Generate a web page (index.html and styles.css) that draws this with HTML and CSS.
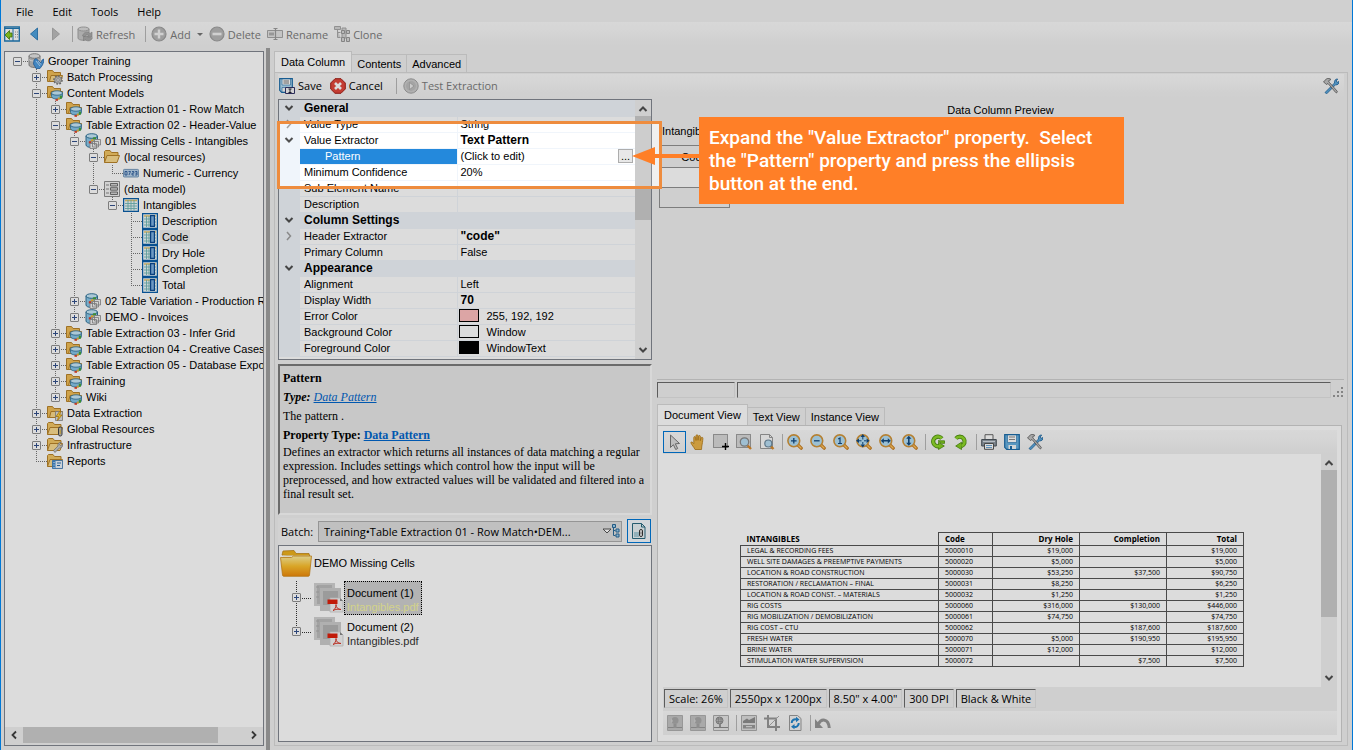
FILE: index.html
```
<!DOCTYPE html>
<html lang="en">
<head>
    <meta charset="UTF-8">
    <meta name="viewport" content="width=device-width, initial-scale=1.0">
    <title>Grooper Design Studio</title>

    <link rel="stylesheet" href="styles.css">
</head>
<body>
    <svg class="defs" aria-hidden="true">
        <!-- tree icons -->
        <symbol id="i-root" viewBox="0 0 16 16">
            <path d="M1 3v9c0 1.400 2.500 2.500 5.500 2.500s5.500-1.100 5.500-2.500V3z" fill="#bdbdbd" stroke="#8a8a8a"/>
            <ellipse cx="6.500" cy="3" rx="5.500" ry="2.300" fill="#e4e4e4" stroke="#8a8a8a"/>
            <path d="M1 6.500c2 2 9 2 11 0" fill="none" stroke="#eee"/>
            <path d="M6 7l2-1.500 5 4.500 1-3 2-1v2l-1.500 4-2.500 3.500H8L5.500 11z" fill="#4d9ce0" stroke="#1d5fa3" stroke-width=".7"/>
            <path d="M8 8l4 5M10 8l3 3.500" stroke="#d9ecff" stroke-width=".8"/>
        </symbol>
        <symbol id="i-folder" viewBox="0 0 16 16">
            <path d="M.5 13.500v-11l1-1H6l1.500 2H14v3" fill="#f3c767" stroke="#b9842a"/>
            <path d="M.5 13.500L3 6.500h12.500L13 13.500z" fill="#fbdc90" stroke="#b9842a"/>
        </symbol>
        <symbol id="i-tabs" viewBox="0 0 16 16">
            <path d="M.5 12.500v-11h5l1.500 2h6.500v9z" fill="#f0bd57" stroke="#b9842a"/>
            <path d="M2.500 12.500l1.500-6h11.500l-1.500 6z" fill="#fbd98b" stroke="#b9842a"/>
        </symbol>
        <symbol id="i-fgear" viewBox="0 0 16 16">
            <use href="#i-tabs"/>
            <circle cx="11" cy="11" r="3.800" fill="none" stroke="#777" stroke-width="2" stroke-dasharray="1.700 1.200"/>
            <circle cx="11" cy="11" r="3.300" fill="#c8c8c8" stroke="#888" stroke-width=".7"/>
            <circle cx="11" cy="11" r="1.300" fill="#fff" stroke="#777" stroke-width=".6"/>
        </symbol>
        <symbol id="i-fmodel" viewBox="0 0 16 16">
            <use href="#i-tabs"/>
            <path d="M4.500 8v3.500c0 1.500 2.500 2.500 5.500 2.500s5.600-1 5.600-2.500V8z" fill="#86c4e8" stroke="#2c6e96" stroke-width=".8"/>
            <ellipse cx="10" cy="8" rx="5.600" ry="2.200" fill="#c8e8f8" stroke="#2c6e96" stroke-width=".8"/>
            <path d="M8.500 15.800h2.500v-1.900H8.500z" fill="#e0402a"/><path d="M10.800 14.600h2v-2h-2z" fill="#f2b52c"/><path d="M12.800 13.600h2.200v-3h-2.200z" fill="#45a53b"/>
        </symbol>
        <symbol id="i-fbolt" viewBox="0 0 16 16">
            <use href="#i-tabs"/>
            <path d="M8.500 6.500h7v9h-7z" fill="#ddd" stroke="#888" stroke-width=".8"/>
            <path d="M12.500 6.500l-3.500 5h2.500l-1 4 4.500-5.500h-2.500l1.500-3.500z" fill="#ffd23e" stroke="#b57a00" stroke-width=".7"/>
        </symbol>
        <symbol id="i-fclip" viewBox="0 0 16 16">
            <use href="#i-folder"/>
            <rect x="11.500" y="6" width="3.500" height="9" rx="1.700" fill="#bbb" stroke="#444"/>
            <path d="M13.200 8.500v4.500" stroke="#e0b52c"/>
        </symbol>
        <symbol id="i-fwrench" viewBox="0 0 16 16">
            <use href="#i-folder"/>
            <path d="M6.500 13.500l4.500-4.500c-.6-2 1-4 3-3.500l-1.500 2 1 1.200 2-1.400c.8 2-1.200 4-3 3.600L8 15.500z" fill="#c9c9c9" stroke="#777" stroke-width=".7"/>
        </symbol>
        <symbol id="i-freport" viewBox="0 0 16 16">
            <use href="#i-folder"/>
            <path d="M5.500 7.500h10v8h-10z" fill="#eaf3fb" stroke="#2d6cab" stroke-width=".8"/>
            <path d="M5.500 7.500h3v8h-3z" fill="#4188cc"/><path d="M10 10h4M10 12.500h3" stroke="#2d6cab"/>
            <path d="M7 9v1M7 11.500v1M7 14v1" stroke="#fff"/>
        </symbol>
        <symbol id="i-model" viewBox="0 0 16 16">
            <path d="M1 3v9c0 1.400 2.500 2.500 5.500 2.500s6-1.100 6-2.500V3z" fill="#8cc9ea" stroke="#22678f" stroke-width=".9"/>
            <ellipse cx="6.700" cy="3" rx="5.700" ry="2.300" fill="#c5e8f8" stroke="#22678f" stroke-width=".9"/>
            <path d="M8 6.500h3V4.300H8z" fill="#45a53b"/><path d="M5.800 8.500h2.700V6.300H5.800z" fill="#f2b52c"/><path d="M3.800 10.500h2.500V8.200H3.800z" fill="#e0402a"/>
            <path d="M9.500 6.500h6v5.500h-6zM7.500 8.500h6v5.500h-6zM5 10.500h6.500v5H5z" fill="#f4f4f4" stroke="#8a8a8a" stroke-width=".8"/>
        </symbol>
        <symbol id="i-form" viewBox="0 0 16 16">
            <path d="M.5.5h15v15H.5z" fill="#f4f4f4" stroke="#8f8f8f"/>
            <path d="M2 4h3M2 8h3M2 12h3" stroke="#888"/>
            <path d="M6.500 2.500h7v2.500h-7zM6.500 6.700h7v2.500h-7zM6.500 11h7v2.500h-7z" fill="#d4d4d4" stroke="#555" stroke-width=".8"/>
        </symbol>
        <symbol id="i-table" viewBox="0 0 16 16">
            <path d="M.6 1.600h14.800v12.800H.6z" fill="#eef7fa" stroke="#0a5ea8" stroke-width="1.200"/>
            <path d="M2 3.500h12" stroke="#e6c56c" stroke-width="1.500"/>
            <path d="M2 6.500h12M2 9h12M2 11.500h12M5 3v10.500M8 3v10.500M11 3v10.500" stroke="#6fb7b5" stroke-width=".9"/>
        </symbol>
        <symbol id="i-col" viewBox="0 0 16 16">
            <path d="M.6.6h14.800v14.800H.6z" fill="#eef7fa" stroke="#0a5ea8" stroke-width="1.200"/>
            <path d="M2 3h12" stroke="#e6c56c" stroke-width="1.500"/>
            <path d="M2 6h12M2 9h12M2 12h12M4.500 3v11M7 3v11" stroke="#6fb7b5" stroke-width=".9"/>
            <path d="M8.600 2.600h3.800v10.800H8.600z" fill="#7fb2e2" stroke="#0b4a92" stroke-width="1.200"/>
        </symbol>

        <!-- toolbar icons -->
        <symbol id="i-panel" viewBox="0 0 16 16">
            <path d="M.7 1h14.600v14H.7z" fill="#fff" stroke="#1f79b5" stroke-width="1.300"/>
            <path d="M1 2.500h14M9 2v13" stroke="#1f79b5"/><path d="M11 6h3M11 8.500h3M11 11h3" stroke="#999" stroke-dasharray="1 1"/>
            <path d="M1 9l4.500-4.500V7H8v4H5.500v2.500z" fill="#8fd020" stroke="#4a7d0c" stroke-width=".8"/>
        </symbol>
        <symbol id="i-refresh" viewBox="0 0 16 16">
            <path d="M1 3v9c0 1.300 2 2.200 5 2.200s6-.9 6-2.200V3z" fill="#c8c8c8" stroke="#a5a5a5"/>
            <ellipse cx="6.500" cy="3" rx="5.500" ry="2" fill="#dcdcdc" stroke="#a5a5a5"/>
            <path d="M5.500 10c1-4 5-5 7.500-2.500L15 6v5h-4.500l1.500-1.500c-2-1.500-3.500-.5-4 1zM15.500 11.500c-.8 3.500-5 4.500-7.500 2L6.500 15v-4.500H11" fill="#aaa" stroke="#8f8f8f" stroke-width=".6"/>
        </symbol>
        <symbol id="i-add" viewBox="0 0 16 16">
            <circle cx="8" cy="8" r="7" fill="#b8b8b8" stroke="#a0a0a0" stroke-width="1.200"/>
            <path d="M8 3.500v9M3.500 8h9" stroke="#f2f2f2" stroke-width="2.400"/>
        </symbol>
        <symbol id="i-del" viewBox="0 0 16 16">
            <circle cx="8" cy="8" r="7" fill="#b8b8b8" stroke="#a0a0a0" stroke-width="1.200"/>
            <path d="M3.500 8h9" stroke="#f2f2f2" stroke-width="2.600"/>
        </symbol>
        <symbol id="i-rename" viewBox="0 0 16 16">
            <path d="M.5 4.500h15v7H.5z" fill="#e4e4e4" stroke="#a5a5a5"/><path d="M2 6.500h5v3H2z" fill="#b0b0b0"/>
            <path d="M6.500 2.500h4M6.500 13.500h4M8.500 2.500v11" stroke="#9c9c9c" stroke-width="1.200"/>
        </symbol>
        <symbol id="i-clone" viewBox="0 0 16 16">
            <path d="M.5.500h6v3h-6zM3.500 3.500v8h3M3.500 6.500h3M8 2h4v10H8z" fill="#d6d6d6" stroke="#a8a8a8"/>
            <path d="M7.500 4.500h3v3h-3zM12.500 4.500h3v3h-3zM7.500 11.500h3v4h-3zM12.500 11.500h3v4h-3z" fill="#d8d8d8" stroke="#999"/>
        </symbol>
        <symbol id="i-save" viewBox="0 0 16 16">
            <path d="M.7.7h14.600v14.600H2.700l-2-2z" fill="#67b0df" stroke="#1c6ca8" stroke-width="1.200"/>
            <path d="M3.500 1h9v7.500h-9z" fill="#fff" stroke="#1c6ca8" stroke-width=".6"/>
            <path d="M5 3h6M5 5.500h6" stroke="#888"/><path d="M4.500 11h7.500v4H4.500z" fill="#f2f6f8"/><path d="M6 12h2v3H6z" fill="#1c6ca8"/>
        </symbol>
        <symbol id="i-savef" viewBox="0 0 16 16">
            <path d="M.7.7h12.600v13.600H2.700l-2-2z" fill="#b5dcf2" stroke="#1c6ca8" stroke-width="1.200"/>
            <path d="M3 1h8.500v6H3z" fill="#fff" stroke="#1c6ca8" stroke-width=".6"/><path d="M4.500 3h5.500M4.500 5h5.500" stroke="#777"/>
            <path d="M3 9.500h4v4.500H3z" fill="#f2f6f8" stroke="#1c6ca8" stroke-width=".6"/>
            <path d="M6.500 9.500h9v6h-9z" fill="#f4f4f4" stroke="#336"/><path d="M9.500 11h3M11 11v3.500M9.500 14.500h3" stroke="#223"/>
        </symbol>
        <symbol id="i-cancel" viewBox="0 0 16 16">
            <path d="M5 .7h6L15.300 5v6L11 15.300H5L.7 11V5z" fill="#e2473a" stroke="#a32018"/>
            <path d="M5 5l6 6M11 5l-6 6" stroke="#fff" stroke-width="2.600"/>
        </symbol>
        <symbol id="i-play" viewBox="0 0 16 16">
            <circle cx="8" cy="8" r="7.200" fill="#cdcdcd" stroke="#a3a3a3"/><circle cx="8" cy="8" r="5" fill="#bfbfbf"/>
            <path d="M6.500 4.500l4.500 3.500-4.500 3.500z" fill="#ececec" stroke="#999" stroke-width=".6"/>
        </symbol>
        <symbol id="i-tools" viewBox="0 0 16 16">
            <path d="M2 14.500L11.500 5c-.5-2.200 1-4.300 3.200-4l-1.500 2 1 1.300L16 3.500c.3 2.200-1.500 3.800-3.500 3.300L3.700 15.800z" fill="#5ba7dd" stroke="#21659c" stroke-width=".8"/>
            <path d="M.5 4l3-3.200C5 0 7 .5 8 1.500L5.500 2.800l.7 1.400 8 9c.6 1-.6 2-1.400 1.400L5 5.500 3.300 6.500 2.500 5.500z" fill="#c2c2c2" stroke="#5a5a5a" stroke-width=".8"/>
        </symbol>
        <symbol id="i-arrow" viewBox="0 0 16 16">
            <path d="M3.500 1l9 8.500-4.200.3 2.400 4.700-2 1-2.300-4.800-2.900 2.800z" fill="#ddd" stroke="#777"/>
        </symbol>
        <symbol id="i-hand" viewBox="0 0 16 16">
            <path d="M5 15.500C4 13 1.500 11 .8 8.500c.6-1 2-.3 3 1.200V3.500c0-1.200 1.700-1.200 1.900 0l.3 3V1.800c0-1.300 1.900-1.300 2 0v4.500l.5-4c.2-1.200 1.900-1 1.900.2l-.1 4.200.8-2.700c.4-1.200 1.900-.8 1.800.4-.2 3-.6 5.600-1.100 7.600l-.3 3.500z" fill="#ecb44a" stroke="#b27a18" stroke-width=".8"/>
        </symbol>
        <symbol id="i-sel" viewBox="0 0 16 16">
            <path d="M.5.500h14v13H.5z" fill="#d9d9d9" stroke="#555" stroke-dasharray="1 1"/>
            <path d="M12.500 9v7M9 12.500h7" stroke="#000" stroke-width="1.400"/>
        </symbol>
        <symbol id="i-selzoom" viewBox="0 0 16 16">
            <path d="M.5.500h14v13H.5z" fill="#d9d9d9" stroke="#555" stroke-dasharray="1 1"/>
            <path d="M11.500 11.500l3.500 3.500" stroke="#d88a2b" stroke-width="2.400"/><circle cx="8.500" cy="8" r="4.200" fill="#b9def4" stroke="#8a8a8a" stroke-width="1.300"/>
        </symbol>
        <symbol id="i-pagezoom" viewBox="0 0 16 16">
            <path d="M1.500.500h9l3 3v11h-12z" fill="#fafafa" stroke="#999"/><path d="M10.500.500v3h3" fill="none" stroke="#999"/>
            <path d="M11.500 12l3 3" stroke="#d88a2b" stroke-width="2.400"/><circle cx="9.300" cy="9.500" r="3.500" fill="#b9def4" stroke="#6d8ba0" stroke-width="1.200"/>
        </symbol>
        <symbol id="i-mag" viewBox="0 0 16 16">
            <path d="M11 11l3.200 3.200" stroke="#c77a1b" stroke-width="3.200" stroke-linecap="round"/>
            <path d="M11.500 11.500l2.500 2.500" stroke="#ffc562" stroke-width="1.400" stroke-linecap="round"/>
            <circle cx="6.800" cy="6.800" r="5.900" fill="#b4dff6" stroke="#d2953a" stroke-width="1.600"/>
        </symbol>
        <symbol id="i-zin" viewBox="0 0 16 16"><use href="#i-mag"/><path d="M6.800 4v5.600M4 6.800h5.600" stroke="#124a80" stroke-width="1.300"/></symbol>
        <symbol id="i-zout" viewBox="0 0 16 16"><use href="#i-mag"/><path d="M4 6.800h5.600" stroke="#124a80" stroke-width="1.300"/></symbol>
        <symbol id="i-z1" viewBox="0 0 16 16"><use href="#i-mag"/><path d="M5.200 5l1.800-1v5M5 9.500h4" fill="none" stroke="#124a80" stroke-width="1.200"/></symbol>
        <symbol id="i-zfit" viewBox="0 0 16 16"><use href="#i-mag"/><path d="M6.800 0l2.200 3H4.600zM6.800 13.600l2.200-3H4.600zM0 6.800l3-2.200v4.400zM13.600 6.800l-3-2.200v4.400z" fill="#124a80"/><path d="M6.800 3v2.500M6.800 8v2.500M3 6.800h2.500M8 6.800h2.500" stroke="#124a80"/></symbol>
        <symbol id="i-zw" viewBox="0 0 16 16"><use href="#i-mag"/><path d="M1.800 6.800l3-2.600V6h4V4.200l3 2.600-3 2.600V7.600h-4v1.800z" fill="#124a80"/></symbol>
        <symbol id="i-zh" viewBox="0 0 16 16"><use href="#i-mag"/><path d="M6.800 1.800l2.600 3H7.600v4h1.800l-2.600 3-2.600-3H6v-4H4.200z" fill="#124a80"/></symbol>
        <symbol id="i-rotr" viewBox="0 0 16 16">
            <path d="M11.800 4.600A4.800 4.800 0 1 0 9.500 12" fill="none" stroke="#4d8c10" stroke-width="4.200"/>
            <path d="M8 6.800h6.500v2.600l-3.200-.2z M8.500 8.200v7.300L14.300 12z" fill="#86cf1f" stroke="#4d8c10" stroke-width=".8"/>
            <path d="M11.800 4.600A4.800 4.800 0 1 0 9.500 12" fill="none" stroke="#8fd82a" stroke-width="2.600"/>
        </symbol>
        <symbol id="i-rotl" viewBox="0 0 16 16">
            <path d="M3 4.600A4.800 4.800 0 1 1 8.500 12" fill="none" stroke="#4d8c10" stroke-width="4.200"/>
            <path d="M8.500 8.200v7.300L2.700 12z" fill="#86cf1f" stroke="#4d8c10" stroke-width=".8"/>
            <path d="M3 4.600A4.800 4.800 0 1 1 8.500 12" fill="none" stroke="#8fd82a" stroke-width="2.600"/>
        </symbol>
        <symbol id="i-print" viewBox="0 0 16 16">
            <path d="M4 .700h8v5H4z" fill="#fff" stroke="#666"/><path d="M.7 5.500h14.600v6.500H.7z" fill="#8f99a3" stroke="#4d555d"/>
            <path d="M3.500 9.500h9v5.800h-9z" fill="#fff" stroke="#555"/><path d="M5 11.500h6M5 13.500h6" stroke="#6fa8d6"/><path d="M2 7.500h12" stroke="#d5dce2"/>
        </symbol>
        <symbol id="i-img" viewBox="0 0 16 16">
            <path d="M.5.500h15v15H.5z" fill="#c4c4c4" stroke="#b0b0b0"/><path d="M1 12.500h14" stroke="#9a9a9a"/>
            <circle cx="8" cy="5.500" r="3.500" fill="#aaa"/><path d="M6.500 9h3v4h-3z" fill="#a5a5a5"/><path d="M4 3l2 3-2 2z" fill="#cfcfcf"/>
        </symbol>
        <symbol id="i-img2" viewBox="0 0 16 16">
            <path d="M.5.500h15v15H.5z" fill="#e6e6e6" stroke="#aaa"/><path d="M1 12.500h14" stroke="#8a8a8a"/>
            <circle cx="6.500" cy="5.500" r="3.500" fill="#bbb" stroke="#888"/><path d="M4 4h5M4 6.500h5M5.500 2.500v6M8 2.500v6" stroke="#888" stroke-width=".6"/><path d="M6 9h2v3H6z" fill="#999"/>
        </symbol>
        <symbol id="i-levels" viewBox="0 0 16 16">
            <path d="M.500.500h15v15h-15z" fill="#dedede" stroke="#aaa"/><path d="M2 8V6L6 3.500 8 5l6-3v6z" fill="#8e8e8e"/><path d="M2 10h12v3.500H2z" fill="#999"/><path d="M5 11.700h6" stroke="#eee"/>
        </symbol>
        <symbol id="i-crop" viewBox="0 0 16 16">
            <path d="M4 0v12h12M0 3.500h12V16" fill="none" stroke="#979797" stroke-width="2"/><path d="M5 11L15 1" stroke="#aaa"/>
        </symbol>
        <symbol id="i-sync" viewBox="0 0 16 16">
            <path d="M2.500.500h8l3.500 3v12H2.500z" fill="#f4f4f4" stroke="#999"/>
            <path d="M4.700 8a3.600 3.600 0 0 1 5-3.500M11.700 8a3.600 3.600 0 0 1-5 3.700" fill="none" stroke="#2386cc" stroke-width="2"/>
            <path d="M9 1.800l3.500 2.700L9 7.300zM7.500 9L4 11.700l3.500 2.600z" fill="#2386cc"/>
        </symbol>
        <symbol id="i-undo" viewBox="0 0 16 16">
            <path d="M3.500 9C6 3.500 13.500 3 14.300 13" fill="none" stroke="#979797" stroke-width="3"/><path d="M0 4v9h8z" fill="#979797"/>
        </symbol>
        <symbol id="i-docbtn" viewBox="0 0 16 16">
            <path d="M1.500.500h9l3.500 3.500v11.500H1.500z" fill="#e8f2f5" stroke="#2a6a80"/><path d="M10.500.500V4H14" fill="none" stroke="#2a6a80"/>
            <path d="M3 9h5v5H3z" fill="#a8cdd8"/><rect x="8.500" y="6.500" width="3" height="7" rx="1.500" fill="#fff" stroke="#333"/><path d="M10 8.500v3" stroke="#333" stroke-width=".7"/>
        </symbol>
        <symbol id="i-batchfolder" viewBox="0 0 32 27">
            <linearGradient id="gold" x1="0" y1="0" x2="0" y2="1"><stop offset="0" stop-color="#fff0a0"/><stop offset=".5" stop-color="#fcc02e"/><stop offset="1" stop-color="#ee8a0c"/></linearGradient>
            <path d="M2 5l1-4 11-.5 2 3h13l1 4z" fill="#eeb21c" stroke="#c0861a" stroke-width=".8"/>
            <path d="M3 5.500h26v4H3z" fill="#fff7dc"/>
            <path d="M.5 7.500h11l2-1.500h18L29.500 25c0 .8-.6 1.300-1.500 1.300H4c-.9 0-1.500-.5-1.500-1.300z" fill="url(#gold)" stroke="#d08a18" stroke-width=".8"/>
        </symbol>
        <symbol id="i-pdf" viewBox="0 0 30 30">
            <path d="M0 0h21v23H0z" fill="#d2d2d2"/><path d="M3 2h15v19H3z" fill="#bcbcbc"/><path d="M6 5h21v23H6z" fill="#ccc"/><path d="M9 8h15v14H9z" fill="#b4b4b4"/>
            <path d="M2 4h3M2 9h3M2 14h3" stroke="#aaa"/>
            <path d="M16 15h10l3 3v11H16z" fill="#f4f4f4" stroke="#ccc" stroke-width=".8"/><path d="M26 15l3 3h-3z" fill="#888"/><path d="M13.500 16.500h10v4.500h-10z" fill="#e01f0a"/>
            <path d="M19 27.500c2-1 3-3.500 3-6 0 3 2 5 5 5-3-.5-5-.5-8 1z" fill="none" stroke="#d8382a"/>
        </symbol>
        <symbol id="i-up" viewBox="0 0 10 10"><path d="M1.500 7L5 3.500 8.500 7" fill="none" stroke="#505050" stroke-width="2"/></symbol>
        <symbol id="i-down" viewBox="0 0 10 10"><path d="M1.500 3L5 6.500 8.500 3" fill="none" stroke="#505050" stroke-width="2"/></symbol>
        <symbol id="i-left" viewBox="0 0 10 10"><path d="M7 1.500L3.500 5 7 8.500" fill="none" stroke="#404040" stroke-width="1.800"/></symbol>
        <symbol id="i-right" viewBox="0 0 10 10"><path d="M3 1.500L6.500 5 3 8.500" fill="none" stroke="#404040" stroke-width="1.800"/></symbol>
        <symbol id="i-closed" viewBox="0 0 10 10"><path d="M3 1L6.500 5 3 9" fill="none" stroke="#a0a0a0" stroke-width="1.500"/></symbol>
    </svg>

    <div class="app">
        <nav class="menu">
            <button>File</button><button>Edit</button><button>Tools</button><button>Help</button>
        </nav>
        <div class="toolbar main-bar">
            <button aria-label="Show panel"><svg><use href="#i-panel"/></svg></button>
            <button aria-label="Back"><svg viewBox="0 0 16 16"><path d="M11.500 2v12L4.500 8z" fill="#4fa3de" stroke="#1c6fae" stroke-width=".8"/></svg></button>
            <button aria-label="Forward"><svg viewBox="0 0 16 16"><path d="M4.500 2v12l7-6z" fill="#bdbdbd" stroke="#a5a5a5" stroke-width=".8"/></svg></button>
            <i class="sep"></i>
            <button class="off"><svg><use href="#i-refresh"/></svg>Refresh</button>
            <i class="sep wide"></i>
            <button class="off"><svg><use href="#i-add"/></svg>Add<span class="caret"></span></button>
            <button class="off"><svg><use href="#i-del"/></svg>Delete</button>
            <button class="off"><svg><use href="#i-rename"/></svg>Rename</button>
            <button class="off"><svg><use href="#i-clone"/></svg>Clone</button>
        </div>

        <div class="work">
            <aside class="tree-pane">
                <ul class="tree">
                    <li><div class="node"><button class="exp" aria-label="Collapse"></button><svg><use href="#i-root"/></svg><span>Grooper Training</span></div>
                        <ul>
                            <li><div class="node"><button class="exp plus" aria-label="Expand"></button><svg><use href="#i-fgear"/></svg><span>Batch Processing</span></div></li>
                            <li><div class="node"><button class="exp" aria-label="Collapse"></button><svg><use href="#i-fmodel"/></svg><span>Content Models</span></div>
                                <ul>
                                    <li><div class="node"><button class="exp plus" aria-label="Expand"></button><svg><use href="#i-fmodel"/></svg><span>Table Extraction 01 - Row Match</span></div></li>
                                    <li><div class="node"><button class="exp" aria-label="Collapse"></button><svg><use href="#i-fmodel"/></svg><span>Table Extraction 02 - Header-Value</span></div>
                                        <ul>
                                            <li><div class="node"><button class="exp" aria-label="Collapse"></button><svg><use href="#i-model"/></svg><span>01 Missing Cells - Intangibles</span></div>
                                                <ul>
                                                    <li><div class="node"><button class="exp" aria-label="Collapse"></button><svg><use href="#i-folder"/></svg><span>(local resources)</span></div>
                                                        <ul>
                                                            <li><div class="node leaf"><svg viewBox="0 0 16 16"><rect x=".4" y="4.400" width="15.200" height="7.600" rx="1" fill="#b9d2ea" stroke="#5c86ad" stroke-width=".8"/><path d="M2 6.500h2v3.500H2zM5.500 6.500h2L6 10M9 6.500h1.800V8.200H9V10h2M12.200 6.500H14V10h-1.800M12.500 8.200H14" fill="none" stroke="#1c4e92" stroke-width=".8"/></svg><span>Numeric - Currency</span></div></li>
                                                        </ul>
                                                    </li>
                                                    <li><div class="node"><button class="exp" aria-label="Collapse"></button><svg><use href="#i-form"/></svg><span>(data model)</span></div>
                                                        <ul>
                                                            <li><div class="node"><button class="exp" aria-label="Collapse"></button><svg><use href="#i-table"/></svg><span>Intangibles</span></div>
                                                                <ul>
                                                                    <li><div class="node leaf"><svg><use href="#i-col"/></svg><span>Description</span></div></li>
                                                                    <li><div class="node leaf"><svg><use href="#i-col"/></svg><span class="picked">Code</span></div></li>
                                                                    <li><div class="node leaf"><svg><use href="#i-col"/></svg><span>Dry Hole</span></div></li>
                                                                    <li><div class="node leaf"><svg><use href="#i-col"/></svg><span>Completion</span></div></li>
                                                                    <li><div class="node leaf"><svg><use href="#i-col"/></svg><span>Total</span></div></li>
                                                                </ul>
                                                            </li>
                                                        </ul>
                                                    </li>
                                                </ul>
                                            </li>
                                            <li><div class="node"><button class="exp plus" aria-label="Expand"></button><svg><use href="#i-model"/></svg><span>02 Table Variation - Production Report</span></div></li>
                                            <li><div class="node"><button class="exp plus" aria-label="Expand"></button><svg><use href="#i-model"/></svg><span>DEMO - Invoices</span></div></li>
                                        </ul>
                                    </li>
                                    <li><div class="node"><button class="exp plus" aria-label="Expand"></button><svg><use href="#i-fmodel"/></svg><span>Table Extraction 03 - Infer Grid</span></div></li>
                                    <li><div class="node"><button class="exp plus" aria-label="Expand"></button><svg><use href="#i-fmodel"/></svg><span>Table Extraction 04 - Creative Cases</span></div></li>
                                    <li><div class="node"><button class="exp plus" aria-label="Expand"></button><svg><use href="#i-fmodel"/></svg><span>Table Extraction 05 - Database Export</span></div></li>
                                    <li><div class="node"><button class="exp plus" aria-label="Expand"></button><svg><use href="#i-fmodel"/></svg><span>Training</span></div></li>
                                    <li><div class="node"><button class="exp plus" aria-label="Expand"></button><svg><use href="#i-fmodel"/></svg><span>Wiki</span></div></li>
                                </ul>
                            </li>
                            <li><div class="node"><button class="exp plus" aria-label="Expand"></button><svg><use href="#i-fbolt"/></svg><span>Data Extraction</span></div></li>
                            <li><div class="node"><button class="exp plus" aria-label="Expand"></button><svg><use href="#i-fclip"/></svg><span>Global Resources</span></div></li>
                            <li><div class="node"><button class="exp plus" aria-label="Expand"></button><svg><use href="#i-fwrench"/></svg><span>Infrastructure</span></div></li>
                            <li><div class="node leaf"><svg><use href="#i-freport"/></svg><span>Reports</span></div></li>
                        </ul>
                    </li>
                </ul>
                <div class="hscroll">
                    <svg><use href="#i-left"/></svg>
                    <div class="track"><div class="thumb"></div></div>
                    <svg><use href="#i-right"/></svg>
                </div>
            </aside>
            <div class="splitter"></div>

            <section class="editor">
                <div class="tabs">
                    <button class="active">Data Column</button><button>Contents</button><button>Advanced</button>
                </div>
                <div class="page">
                    <div class="toolbar edit-bar">
                        <button><svg><use href="#i-savef"/></svg>Save</button>
                        <button><svg><use href="#i-cancel"/></svg>Cancel</button>
                        <i class="sep"></i>
                        <button class="off"><svg><use href="#i-play"/></svg>Test Extraction</button>
                        <button class="end" aria-label="Options"><svg><use href="#i-tools"/></svg></button>
                    </div>

                    <div class="columns">
                        <div class="left">
                            <div class="props">
                                <table>
                                    <tr class="cat"><td class="gut"><svg><use href="#i-down"/></svg></td><th colspan="2">General</th></tr>
                                    <tr><td class="gut"><svg><use href="#i-closed"/></svg></td><th>Value Type</th><td>String</td></tr>
                                    <tr><td class="gut"><svg><use href="#i-down"/></svg></td><th>Value Extractor</th><td><b>Text Pattern</b></td></tr>
                                    <tr class="current"><td class="gut"></td><th>Pattern</th><td><div class="edit">(Click to edit)<button>...</button></div></td></tr>
                                    <tr><td class="gut"></td><th>Minimum Confidence</th><td>20%</td></tr>
                                    <tr><td class="gut"></td><th>Sub Element Name</th><td></td></tr>
                                    <tr><td class="gut"></td><th>Description</th><td></td></tr>
                                    <tr class="cat"><td class="gut"><svg><use href="#i-down"/></svg></td><th colspan="2">Column Settings</th></tr>
                                    <tr><td class="gut"><svg><use href="#i-closed"/></svg></td><th>Header Extractor</th><td><b>"code"</b></td></tr>
                                    <tr><td class="gut"></td><th>Primary Column</th><td>False</td></tr>
                                    <tr class="cat"><td class="gut"><svg><use href="#i-down"/></svg></td><th colspan="2">Appearance</th></tr>
                                    <tr><td class="gut"></td><th>Alignment</th><td>Left</td></tr>
                                    <tr><td class="gut"></td><th>Display Width</th><td><b>70</b></td></tr>
                                    <tr><td class="gut"></td><th>Error Color</th><td class="color"><i class="swatch error"></i>255, 192, 192</td></tr>
                                    <tr><td class="gut"></td><th>Background Color</th><td class="color"><i class="swatch window"></i>Window</td></tr>
                                    <tr><td class="gut"></td><th>Foreground Color</th><td class="color"><i class="swatch text"></i>WindowText</td></tr>
                                </table>
                                <div class="vscroll">
                                    <svg><use href="#i-up"/></svg>
                                    <div class="track"><div class="thumb"></div></div>
                                    <svg><use href="#i-down"/></svg>
                                </div>
                            </div>

                            <div class="help">
                                <p><b>Pattern</b></p>
                                <p><i><b>Type:</b> <a href="#">Data Pattern</a></i></p>
                                <p>The pattern .</p>
                                <p class="tight"><b>Property Type: <a href="#">Data Pattern</a></b></p>
                                <p>Defines an extractor which returns all instances of data matching a regular expression. Includes settings which control how the input will be preprocessed, and how extracted values will be validated and filtered into a final result set.</p>
                            </div>

                            <div class="batch-bar">
                                <label for="batch">Batch:</label>
                                <div class="picker">
                                    <select id="batch"><option>Training•Table Extraction 01 - Row Match•DEM...</option></select>
                                    <svg viewBox="0 0 18 14"><path d="M1 5h8L5 9z" fill="#fff" stroke="#555"/><path d="M11.500 1v10.500h2M11.500 6.500h2" fill="none" stroke="#2a6a9a"/><path d="M10.500.500h3v3h-3zM14 5h3v3h-3zM14 10h3v3h-3z" fill="#9fd0ee" stroke="#2a6a9a"/></svg>
                                </div>
                                <button aria-label="Open document"><svg><use href="#i-docbtn"/></svg></button>
                            </div>

                            <div class="batch">
                                <div class="batch-root"><svg><use href="#i-batchfolder"/></svg>DEMO Missing Cells</div>
                                <ul>
                                    <li><button class="exp plus" aria-label="Expand"></button><svg><use href="#i-pdf"/></svg><div class="doc picked">Document (1)<br><span>Intangibles.pdf</span></div></li>
                                    <li><button class="exp plus" aria-label="Expand"></button><svg><use href="#i-pdf"/></svg><div class="doc">Document (2)<br><span>Intangibles.pdf</span></div></li>
                                </ul>
                            </div>
                        </div>

                        <div class="right">
                            <div class="preview">
                                <h2>Data Column Preview</h2>
                                <p>Intangibles</p>
                                <table>
                                    <tr><th>Code</th></tr>
                                    <tr><td></td></tr>
                                    <tr><td></td></tr>
                                </table>
                            </div>
                            <div class="status">
                                <div class="cell short"></div><div class="cell"></div>
                                <svg class="grip" viewBox="0 0 11 11"><path d="M8 0h2v2H8zM4 4h2v2H4zM8 4h2v2H8zM0 8h2v2H0zM4 8h2v2H4zM8 8h2v2H8z" fill="#999"/></svg>
                            </div>

                            <div class="tabs view-tabs">
                                <button class="active">Document View</button><button>Text View</button><button>Instance View</button>
                            </div>
                            <div class="viewer">
                                <div class="toolbar view-bar">
                                    <button class="on" aria-label="Select"><svg><use href="#i-arrow"/></svg></button>
                                    <button aria-label="Pan"><svg><use href="#i-hand"/></svg></button>
                                    <button aria-label="Region"><svg><use href="#i-sel"/></svg></button>
                                    <button aria-label="Zoom region"><svg><use href="#i-selzoom"/></svg></button>
                                    <button aria-label="Zoom page"><svg><use href="#i-pagezoom"/></svg></button>
                                    <i class="sep"></i>
                                    <button aria-label="Zoom in"><svg><use href="#i-zin"/></svg></button>
                                    <button aria-label="Zoom out"><svg><use href="#i-zout"/></svg></button>
                                    <button aria-label="Actual size"><svg><use href="#i-z1"/></svg></button>
                                    <button aria-label="Fit"><svg><use href="#i-zfit"/></svg></button>
                                    <button aria-label="Fit width"><svg><use href="#i-zw"/></svg></button>
                                    <button aria-label="Fit height"><svg><use href="#i-zh"/></svg></button>
                                    <i class="sep"></i>
                                    <button aria-label="Rotate right"><svg><use href="#i-rotr"/></svg></button>
                                    <button aria-label="Rotate left"><svg><use href="#i-rotl"/></svg></button>
                                    <i class="sep"></i>
                                    <button aria-label="Print"><svg><use href="#i-print"/></svg></button>
                                    <button aria-label="Save image"><svg><use href="#i-save"/></svg></button>
                                    <button aria-label="Settings"><svg><use href="#i-tools"/></svg></button>
                                </div>
                                <div class="canvas">
                                    <div class="paper">
                                        <table>
                                            <tr><th>INTANGIBLES</th><th>Code</th><th>Dry Hole</th><th>Completion</th><th>Total</th></tr>
                                            <tr><td>LEGAL &amp; RECORDING FEES</td><td>5000010</td><td>$19,000</td><td></td><td>$19,000</td></tr>
                                            <tr><td>WELL SITE DAMAGES &amp; PREEMPTIVE PAYMENTS</td><td>5000020</td><td>$5,000</td><td></td><td>$5,000</td></tr>
                                            <tr><td>LOCATION &amp; ROAD CONSTRUCTION</td><td>5000030</td><td>$53,250</td><td>$37,500</td><td>$90,750</td></tr>
                                            <tr><td>RESTORATION / RECLAMATION – FINAL</td><td>5000031</td><td>$8,250</td><td></td><td>$6,250</td></tr>
                                            <tr><td>LOCATION &amp; ROAD CONST. – MATERIALS</td><td>5000032</td><td>$1,250</td><td></td><td>$1,250</td></tr>
                                            <tr><td>RIG COSTS</td><td>5000060</td><td>$316,000</td><td>$130,000</td><td>$446,000</td></tr>
                                            <tr><td>RIG MOBILIZATION / DEMOBILIZATION</td><td>5000061</td><td>$74,750</td><td></td><td>$74,750</td></tr>
                                            <tr><td>RIG COST – CTU</td><td>5000062</td><td></td><td>$187,600</td><td>$187,600</td></tr>
                                            <tr><td>FRESH WATER</td><td>5000070</td><td>$5,000</td><td>$190,950</td><td>$195,950</td></tr>
                                            <tr><td>BRINE WATER</td><td>5000071</td><td>$12,000</td><td></td><td>$12,000</td></tr>
                                            <tr><td>STIMULATION WATER SUPERVISION</td><td>5000072</td><td></td><td>$7,500</td><td>$7,500</td></tr>
                                        </table>
                                    </div>
                                    <div class="vscroll">
                                        <svg><use href="#i-up"/></svg>
                                        <div class="track"><div class="thumb"></div></div>
                                        <svg><use href="#i-down"/></svg>
                                    </div>
                                </div>
                                <div class="info">
                                    <span>Scale: 26%</span><span>2550px x 1200px</span><span>8.50" x 4.00"</span><span>300 DPI</span><span>Black &amp; White</span>
                                </div>
                                <div class="toolbar image-bar">
                                    <button aria-label="Image"><svg><use href="#i-img"/></svg></button>
                                    <button aria-label="Image original"><svg><use href="#i-img"/></svg></button>
                                    <button aria-label="Image mask"><svg><use href="#i-img2"/></svg></button>
                                    <i class="sep"></i>
                                    <button aria-label="Levels"><svg><use href="#i-levels"/></svg></button>
                                    <button aria-label="Crop"><svg><use href="#i-crop"/></svg></button>
                                    <button aria-label="Reload"><svg><use href="#i-sync"/></svg></button>
                                    <i class="sep"></i>
                                    <button aria-label="Undo"><svg><use href="#i-undo"/></svg></button>
                                </div>
                            </div>
                        </div>
                    </div>
                </div>
            </section>
        </div>

        <!-- tutorial annotation -->
        <div class="spotlight"></div>
        <svg class="pointer" viewBox="0 0 70 20"><path d="M20 8h50v4H20z" fill="#ff7f27"/><path d="M0 10L23 1v18z" fill="#ff7f27"/></svg>
        <div class="callout">Expand the "Value Extractor" property.&nbsp; Select the "Pattern" property and press the ellipsis button at the end.</div>
    </div>
</body>
</html>
```
FILE: styles.css
```
*{
    box-sizing: border-box;
}
body{
    margin: 0;
    font-family: "Liberation Sans", Arial, sans-serif;
    font-size: 11px;
    color: #000;
    background: #f0f0f0;
}
ul{
    list-style: none;
    margin: 0;
    padding: 0;
}
button{
    margin: 0;
    padding: 0;
    border: 0;
    background: none;
    font: inherit;
    color: inherit;
}
svg{
    width: 16px;
    height: 16px;
    flex: none;
    display: block;
}
table{
    border-collapse: collapse;
}
.defs{
    position: absolute;
    width: 0;
    height: 0;
}
.app{
    position: relative;
    overflow: hidden;
    min-height: 100vh;
    display: flex;
    flex-direction: column;
    border-left: 1px solid #0078d7;
    border-right: 1px solid #0078d7;
}

/* menu and toolbars */
.menu,.toolbar,.batch-bar,.info{
    font-family: "Open Sans", "Noto Sans", sans-serif;
    font-size: 11px;
}
.menu{
    display: flex;
    gap: 19px;
    height: 22px;
    padding-left: 15px;
    background: #f1f1f1;
}
.toolbar{
    display: flex;
    align-items: center;
    height: 24px;
    background: linear-gradient(#fbfbfb, #f0f0f0);
}
.toolbar button{
    display: flex;
    align-items: center;
    gap: 3px;
    height: 22px;
    white-space: nowrap;
}
.toolbar .off{
    color: #7b7b7b;
}
.toolbar .end{
    margin-left: auto;
}
.sep{
    width: 1px;
    height: 16px;
    margin: 0 0 0 4px;
    background: #b8b8b8;
}
.caret{
    margin: 0 0 0 3px;
    border: 3px solid transparent;
    border-top-color: #777;
    border-bottom: 0;
}
.main-bar{
    padding-left: 3px;
    gap: 6px;
}
.main-bar .sep{
    margin: 0 -2px 0 2px;
}
.main-bar .wide{
    margin: 0 -1px 0 4px;
}
.edit-bar{
    padding: 0 5px 0 1px;
    gap: 8px;
    height: 23px;
}
.edit-bar .sep{
    margin: 0 -2px 0 5px;
}

.work{
    flex: 1;
    display: flex;
    padding-top: 2px;
}

/* left tree */
.tree-pane{
    width: 260px;
    flex: none;
    display: flex;
    flex-direction: column;
    justify-content: space-between;
    margin: 3px 2px 4px 3px;
    border: 1px solid #828790;
    background: #fff;
    overflow: hidden;
}
.tree{
    padding: 1px 0 0 8px;
}
.tree ul{
    margin-left: 19px;
}
.tree ul li{
    background: repeating-linear-gradient(#777 0 1px, transparent 1px 2px) 4px 0 / 1px 100% no-repeat;
}
.tree ul li:last-child{
    background-size: 1px 8px;
}
.node{
    display: flex;
    align-items: center;
    height: 16px;
    white-space: nowrap;
    background: repeating-linear-gradient(90deg, #777 0 1px, transparent 1px 2px) 4px 8px / 11px 1px no-repeat;
}
.node svg{
    margin-left: 6px;
}
.leaf svg{
    margin-left: 15px;
}
.node span{
    margin-left: 2px;
    padding: 1px 2px;
}
.node .picked{
    background: #f0f0f0;
}
.exp{
    width: 9px;
    height: 9px;
    flex: none;
    border: 1px solid #919191;
    border-radius: 1px;
    background: linear-gradient(#33508c, #33508c) center / 5px 1px no-repeat #fff;
}
.exp.plus{
    background: linear-gradient(#33508c, #33508c) center / 5px 1px no-repeat, linear-gradient(#33508c, #33508c) center / 1px 5px no-repeat #fff;
}
.hscroll{
    display: flex;
    align-items: center;
    height: 18px;
    padding: 0 4px 2px;
    gap: 4px;
    background: #f0f0f0;
}
.hscroll svg,.vscroll svg{
    width: 10px;
    height: 10px;
}
.track{
    flex: 1;
}
.thumb{
    background: #cdcdcd;
}
.hscroll .thumb{
    width: 88%;
    height: 16px;
}
.vscroll{
    width: 16px;
    flex: none;
    display: flex;
    flex-direction: column;
    align-items: center;
    gap: 2px;
    padding: 4px 0;
    background: #f0f0f0;
}
.vscroll .track{
    width: 100%;
}
.splitter{
    width: 4px;
    background: #a0a0a0;
}

/* tabs */
.editor{
    flex: 1;
    min-width: 0;
    display: flex;
    flex-direction: column;
    padding: 3px 4px 4px 4px;
}
.tabs{
    display: flex;
    align-items: flex-end;
    height: 21px;
}
.tabs button{
    height: 18px;
    padding: 0 5px;
    border: 1px solid #d9d9d9;
    border-left: 0;
    border-bottom: 0;
    background: #f0f0f0;
}
.tabs .active{
    height: 21px;
    padding: 0 6px 1px;
    border-left: 1px solid #d9d9d9;
    background: #fff;
}
.page{
    flex: 1;
    display: flex;
    flex-direction: column;
    padding: 1px 3px 3px;
    border: 1px solid #d9d9d9;
    background: #f0f0f0;
}
.columns{
    flex: 1;
    display: flex;
    gap: 5px;
}
.left{
    width: 374px;
    flex: none;
    display: flex;
    flex-direction: column;
}
.right{
    flex: 1;
    min-width: 0;
    display: flex;
    flex-direction: column;
}

/* property grid */
.props{
    display: flex;
    margin-top: 2px;
    border: 1px solid #828790;
    background: #fff;
}
.props table{
    flex: 1;
    table-layout: fixed;
    background: #fff;
    margin-bottom: 2px;
}
.props tr{
    height: 16px;
}
.props th,.props td{
    height: 16px;
    padding: 0 4px;
    line-height: 14px;
    font-weight: 400;
    text-align: left;
    white-space: nowrap;
    border-bottom: 1px solid #f0f5fb;
}
.props th{
    width: 157px;
}
.props .gut{
    width: 21px;
    padding: 0 5px;
    background: #f0f5fb;
}
.gut svg{
    width: 10px;
    height: 10px;
}
.props td + th + td{
    border-left: 1px solid #f0f5fb;
    padding: 0 2px 0 3px;
}
.props b,.props .cat th{
    font-size: 12px;
    font-weight: 700;
}
.props .cat th{
    background: #f0f5fb;
}
.props .current th{
    padding-left: 25px;
    background: #2489dc;
    color: #fff;
}
.edit{
    display: flex;
    justify-content: space-between;
}
.edit button{
    width: 15px;
    height: 14px;
    line-height: 10px;
    border: 1px solid #adadad;
    background: #e8e8e8;
}
.swatch{
    display: inline-block;
    width: 20px;
    height: 13px;
    margin: 0 8px 0 -2px;
    vertical-align: top;
    border: 1px solid #000;
}
.error{
    background: #ffc0c0;
}
.window{
    background: #fff;
}
.text{
    background: #000;
}
.props .thumb{
    height: 104px;
}

/* description of the selected property */
.help{
    height: 151px;
    margin-top: 4px;
    padding: 5px 3px;
    border: 2px solid;
    border-color: #7c7c7c #fbfbfb #fbfbfb #7c7c7c;
    background: #e8e8e8;
    font-family: "Liberation Serif", "Times New Roman", serif;
    font-size: 12px;
    line-height: 14px;
}
.help p{
    margin: 0 0 5px;
}
.help .tight{
    margin-bottom: 3px;
}
.help a{
    color: #0066cc;
}

/* batch selector */
.batch-bar{
    display: flex;
    align-items: center;
    height: 27px;
    margin-top: 3px;
    padding: 0 1px 0 3px;
    gap: 5px;
    background: #f4f4f4;
}
.picker{
    flex: 1;
    display: grid;
    align-items: center;
}
.picker select,.picker svg{
    grid-area: 1 / 1;
}
.picker select{
    width: 100%;
    height: 21px;
    padding: 0 24px 0 5px;
    appearance: none;
    border: 1px solid #adadad;
    border-radius: 0;
    background: #dfdfdf;
    font: inherit;
    color: inherit;
}
.picker svg{
    width: 18px;
    height: 14px;
    justify-self: end;
    margin-right: 2px;
    pointer-events: none;
}
.batch-bar button{
    padding: 3px;
    border: 1px solid #0078d7;
    background: #f4f9fd;
}

/* batch contents */
.batch{
    flex: 1;
    padding: 4px 1px;
    border: 1px solid #828790;
    background: #fff;
}
.batch-root{
    display: flex;
    align-items: center;
    gap: 2px;
    padding-bottom: 4px;
}
.batch-root svg{
    width: 32px;
    height: 27px;
}
.batch ul{
    padding-left: 12px;
}
.batch li{
    display: flex;
    align-items: center;
    height: 34px;
    background: repeating-linear-gradient(90deg, #333 0 1px, transparent 1px 2px) 4px 17px / 16px 1px no-repeat, repeating-linear-gradient(#333 0 1px, transparent 1px 2px) 4px 0 / 1px 100% no-repeat;
}
.batch li:last-child{
    background-size: 16px 1px, 1px 17px;
}
.batch li svg{
    width: 30px;
    height: 30px;
    margin-left: 13px;
}
.doc{
    padding: 4px 2px 0;
    line-height: 14px;
    border: 1px solid transparent;
}
.doc span{
    color: #333;
}
.doc.picked{
    background: #d0d0d0;
    border: 1px dotted #000;
}
.doc.picked span{
    color: #f4f4a0;
}

/* column preview */
.preview{
    height: 283px;
    border-bottom: 1px solid #d0d0d0;
}
.preview h2{
    margin: 0;
    padding-top: 6px;
    font-size: 11px;
    font-weight: 400;
    line-height: 14px;
    text-align: center;
}
.preview p{
    margin: 0;
    padding: 7px 5px;
    line-height: 14px;
}
.preview table{
    width: 71px;
    margin-left: 2px;
    border: 1px solid #919191;
}
.preview th,.preview td{
    height: 20px;
    padding: 0;
    border: 1px solid #919191;
    font-weight: 400;
}
.preview th{
    height: 22px;
}
.preview tr:nth-child(2) td{
    background: #fff;
}
.status{
    display: flex;
    align-items: center;
    gap: 2px;
    margin-top: 2px;
}
.cell{
    flex: 1;
    height: 16px;
    border: 1px solid;
    border-color: #6b6b6b #e3e3e3 #e3e3e3 #6b6b6b;
}
.cell.short{
    flex: 0 0 78px;
}
.grip{
    width: 11px;
    height: 11px;
    align-self: flex-end;
}

/* document viewer */
.view-tabs{
    margin-top: 6px;
}
.viewer{
    flex: 1;
    display: flex;
    flex-direction: column;
    margin: 0 2px 0 0;
    padding: 4px 4px 6px 5px;
    border: 1px solid #d0d0d0;
    background: #fff;
}
.view-bar button{
    width: 23px;
    justify-content: center;
}
.view-bar .on{
    border: 1px solid #0078d7;
}
.canvas{
    flex: 1;
    display: flex;
    background: #fff;
}
.canvas .thumb{
    height: 147px;
}
.paper{
    flex: 1;
    padding: 78px 0 16px;
}
.paper table{
    width: 504px;
    margin: 0 auto;
    table-layout: fixed;
    font-family: "Open Sans", "Noto Sans", sans-serif;
    font-size: 7px;
    line-height: 10px;
}
.paper th,.paper td{
    height: 11px;
    padding: 0 6px;
    border: 1px solid #555;
    text-align: right;
    white-space: nowrap;
}
.paper th{
    height: 13px;
    font-size: 8px;
}
.paper th:nth-child(-n+2),.paper td:nth-child(-n+2){
    text-align: left;
}
.paper th:first-child{
    width: 198px;
    border-top: 0;
    border-left: 0;
}
.paper th:nth-child(2){
    width: 54px;
}
.paper th:nth-child(3){
    width: 87px;
}
.paper th:nth-child(4){
    width: 87px;
}
.info{
    display: flex;
    gap: 2px;
    padding: 2px 1px 3px;
    background: #f0f0f0;
}
.info span{
    padding: 0 4px;
    line-height: 17px;
    border: 1px solid;
    border-color: #6b6b6b #e3e3e3 #e3e3e3 #6b6b6b;
}
.image-bar button{
    width: 23px;
    justify-content: center;
}

/* tutorial annotation */
.spotlight{
    position: absolute;
    left: 276px;
    top: 121px;
    width: 385px;
    height: 68px;
    border: 3px solid #ee8c3e;
    box-shadow: 0 0 0 2000px rgba(0, 0, 0, .137);
    pointer-events: none;
}
.pointer{
    position: absolute;
    left: 631px;
    top: 146px;
    width: 70px;
    height: 20px;
}
.callout{
    position: absolute;
    left: 698px;
    top: 117px;
    width: 425px;
    padding: 9px 10px;
    background: #ff7f27;
    color: #fff;
    font-family: Roboto, sans-serif;
    font-size: 19px;
    font-weight: 500;
    line-height: 23px;
}
```
